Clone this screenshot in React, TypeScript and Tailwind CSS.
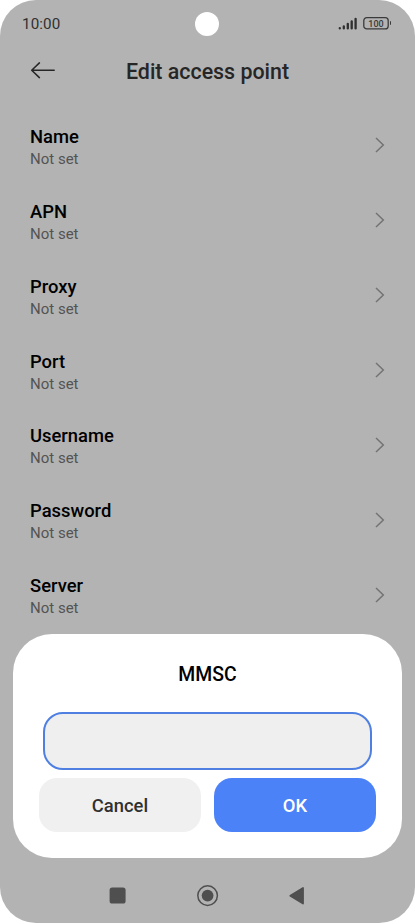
import React from "react";

type Field = {
  label: string;
  value: string;
};

const fields: Field[] = [
  { label: "Name", value: "Not set" },
  { label: "APN", value: "Not set" },
  { label: "Proxy", value: "Not set" },
  { label: "Port", value: "Not set" },
  { label: "Username", value: "Not set" },
  { label: "Password", value: "Not set" },
  { label: "Server", value: "Not set" },
];

function StatusBar() {
  return (
    <div className="h-12 shrink-0 grid grid-cols-3 items-center pl-[22px] pr-6">
      <span className="pt-px text-[15.2px] leading-none tracking-[0.1px] text-[#303030]">10:00</span>
      <span className="size-6 rounded-full bg-white justify-self-center" />
      <div className="flex items-center justify-end gap-[5px] pb-[2px]">
        {/* signal */}
        <svg width="20" height="13" viewBox="0 0 20 13" stroke="#303030" strokeWidth="2.3" strokeLinecap="round">
          <path d="M1.8 11.2v.2M5.8 9.4v2M9.8 6.8v4.6M13.7 4.3v7.1M17.6 1.8v9.6" />
        </svg>
        {/* battery */}
        <div className="flex items-center gap-px">
          <svg width="26" height="13" viewBox="0 0 26 13">
            <rect x=".8" y=".7" width="24.4" height="11.2" rx="3" fill="none" stroke="#3a3a3a" strokeWidth="1.3" />
            <text x="13" y="9.6" textAnchor="middle" fontSize="9" fontWeight="500" fill="#3a3a3a">
              100
            </text>
          </svg>
          <div className="w-[1.5px] h-1 rounded-r-sm bg-[#3a3a3a]" />
        </div>
      </div>
    </div>
  );
}

function Header() {
  return (
    <header className="h-[60px] shrink-0 grid grid-cols-[26px_1fr_26px] items-start px-[30px] pt-[9px]">
      <button aria-label="Back" className="pt-[5px]">
        <svg width="26" height="17" viewBox="0 0 26 17" fill="none" stroke="#262626" strokeWidth="1.5" strokeLinecap="round" strokeLinejoin="round">
          <path d="M24.2 8.2H1.7M9.4 .9L1.7 8.2l7.7 7.4" />
        </svg>
      </button>
      <h1 className="pt-px text-center text-[21.4px] leading-7 font-medium text-[#262626]">Edit access point</h1>
    </header>
  );
}

function FieldRow({ label, value }: Field) {
  return (
    <li className="h-[74.88px] flex items-center justify-between pl-[30px] pr-[30px]">
      <div className="pt-[3px]">
        <p className="text-[18.4px] leading-6 font-medium text-black">{label}</p>
        <p className="text-[15px] leading-5 text-[#535353]">{value}</p>
      </div>
      <svg width="10" height="16" viewBox="0 0 10 16" fill="none" stroke="#737373" strokeWidth="1.5">
        <path d="M1 1l7.3 7L1 15" />
      </svg>
    </li>
  );
}

function MmscDialog() {
  return (
    <div
      role="dialog"
      aria-label="MMSC"
      className="absolute left-[13px] right-[13px] top-[633.5px] h-[224.5px] rounded-[39px] bg-white px-[26px] pt-[27px]"
    >
      <h2 className="text-center text-[19.4px] leading-7 font-medium text-black">MMSC</h2>
      <div className="px-1 pt-[23px]">
        <input className="block w-full h-[58px] rounded-[20px] border-2 border-[#4f80e1] bg-[#efefef] px-4 text-lg outline-none" />
      </div>
      <div className="grid grid-cols-2 gap-[13px] pt-2">
        <button className="h-[54px] rounded-[18px] bg-[#f0f0f0] pt-[3px] text-[18.4px] font-medium text-[#303030]">Cancel</button>
        <button className="h-[54px] rounded-[18px] bg-[#4c82f7] pt-[3px] text-[18.4px] font-medium text-white">OK</button>
      </div>
    </div>
  );
}

function NavBar() {
  return (
    <nav className="mt-auto h-[55px] shrink-0 flex items-center justify-between px-[108.5px]">
      <svg width="18" height="18" viewBox="0 0 18 18">
        <rect x=".6" y=".5" width="16" height="16" rx="2.6" fill="#4f4f4f" />
      </svg>
      <svg width="22" height="22" viewBox="0 0 22 22">
        <circle cx="10.6" cy="10.6" r="9.8" fill="none" stroke="#4f4f4f" strokeWidth="1.5" />
        <circle cx="10.6" cy="10.6" r="5.9" fill="#4f4f4f" />
      </svg>
      <svg width="18" height="20" viewBox="0 0 18 20">
        <path d="M1.3 9.7L14 2v15.6z" fill="#4f4f4f" stroke="#4f4f4f" strokeWidth="1.8" strokeLinejoin="round" />
      </svg>
    </nav>
  );
}

export default function App() {
  return (
    <div className="bg-white font-['Roboto',sans-serif]">
      <div className="relative w-[415px] h-[923px] rounded-[36px] overflow-hidden bg-[#b3b3b3] flex flex-col">
        <StatusBar />
        <Header />
        <ul>
          {fields.map((field) => (
            <FieldRow key={field.label} label={field.label} value={field.value} />
          ))}
        </ul>
        <NavBar />
        <MmscDialog />
      </div>
    </div>
  );
}
